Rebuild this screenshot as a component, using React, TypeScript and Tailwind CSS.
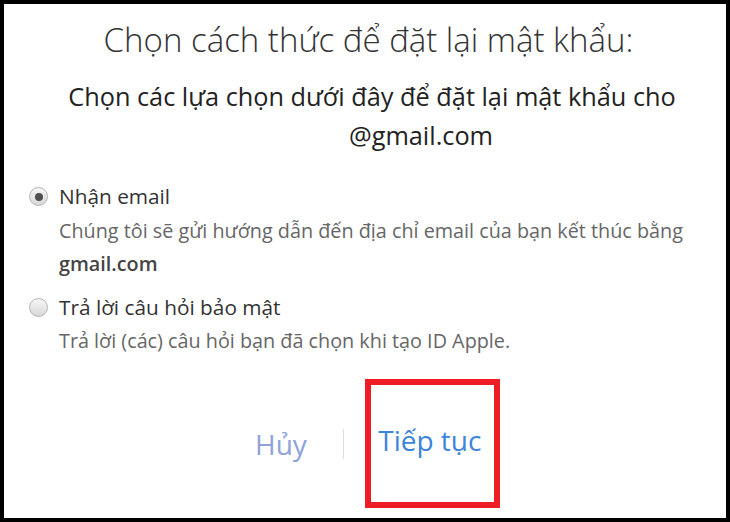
import React from "react";

export default function App() {
  return (
    <div className="w-[730px] h-[522px] bg-black p-[4px] overflow-hidden" style={{ fontFamily: '"Open Sans", "Noto Sans", sans-serif' }}>
      <div className="w-full h-full bg-white flex flex-col">
        <h1 className="mt-[14px] pl-[7px] text-center text-[33px] font-light text-[#333] leading-[44px]">
          Chọn cách thức để đặt lại mật khẩu:
        </h1>
        <p className="mt-[15px] pl-[14px] text-center text-[25.3px] text-[#222] leading-[39px]">
          Chọn các lựa chọn dưới đây để đặt lại mật khẩu cho
          <br />
          <span className="pl-[98px]">@gmail.com</span>
        </p>
        <div className="mt-[27px] pl-[25px] flex flex-col">
          <label className="flex items-start gap-[11px]">
            <span className="mt-[5px] w-[19px] h-[19px] rounded-full border border-[#b5b5b5] bg-gradient-to-b from-[#f6f6f6] to-[#d8d8d8] flex items-center justify-center shrink-0">
              <span className="w-[8px] h-[8px] rounded-full bg-[#505050]" />
            </span>
            <div className="flex flex-col">
              <span className="text-[20.8px] text-[#333] leading-[28px]">Nhận email</span>
              <span className="mt-[3.5px] text-[19.8px] text-[#666] leading-[33px]">
                Chúng tôi sẽ gửi hướng dẫn đến địa chỉ email của bạn kết thúc bằng
                <br />
                <b className="font-semibold text-[#444]">gmail.com</b>
              </span>
            </div>
          </label>
          <label className="mt-[13.5px] flex items-start gap-[11px]">
            <span className="mt-[5px] w-[19px] h-[19px] rounded-full border border-[#b5b5b5] bg-gradient-to-b from-[#f6f6f6] to-[#d8d8d8] shrink-0" />
            <div className="flex flex-col">
              <span className="text-[20.8px] text-[#333] leading-[28px]">Trả lời câu hỏi bảo mật</span>
              <span className="mt-[4px] text-[19.8px] text-[#666] leading-[32px]">
                Trả lời (các) câu hỏi bạn đã chọn khi tạo ID Apple.
              </span>
            </div>
          </label>
        </div>
        <div className="mt-auto mb-[10px] flex items-center pl-[251px]">
          <span className="text-[28px] text-[#8fa3da] leading-[36px]">Hủy</span>
          <span className="ml-[36px] w-px h-[30px] bg-[#ddd]" />
          <div className="ml-[21px] w-[135px] h-[129px] border-[6px] border-[#ee1c25] flex items-center justify-center pb-[8px] pr-[5px]">
            <span className="text-[28px] text-[#3d85d8] leading-[36px]">Tiếp tục</span>
          </div>
        </div>
      </div>
    </div>
  );
}
